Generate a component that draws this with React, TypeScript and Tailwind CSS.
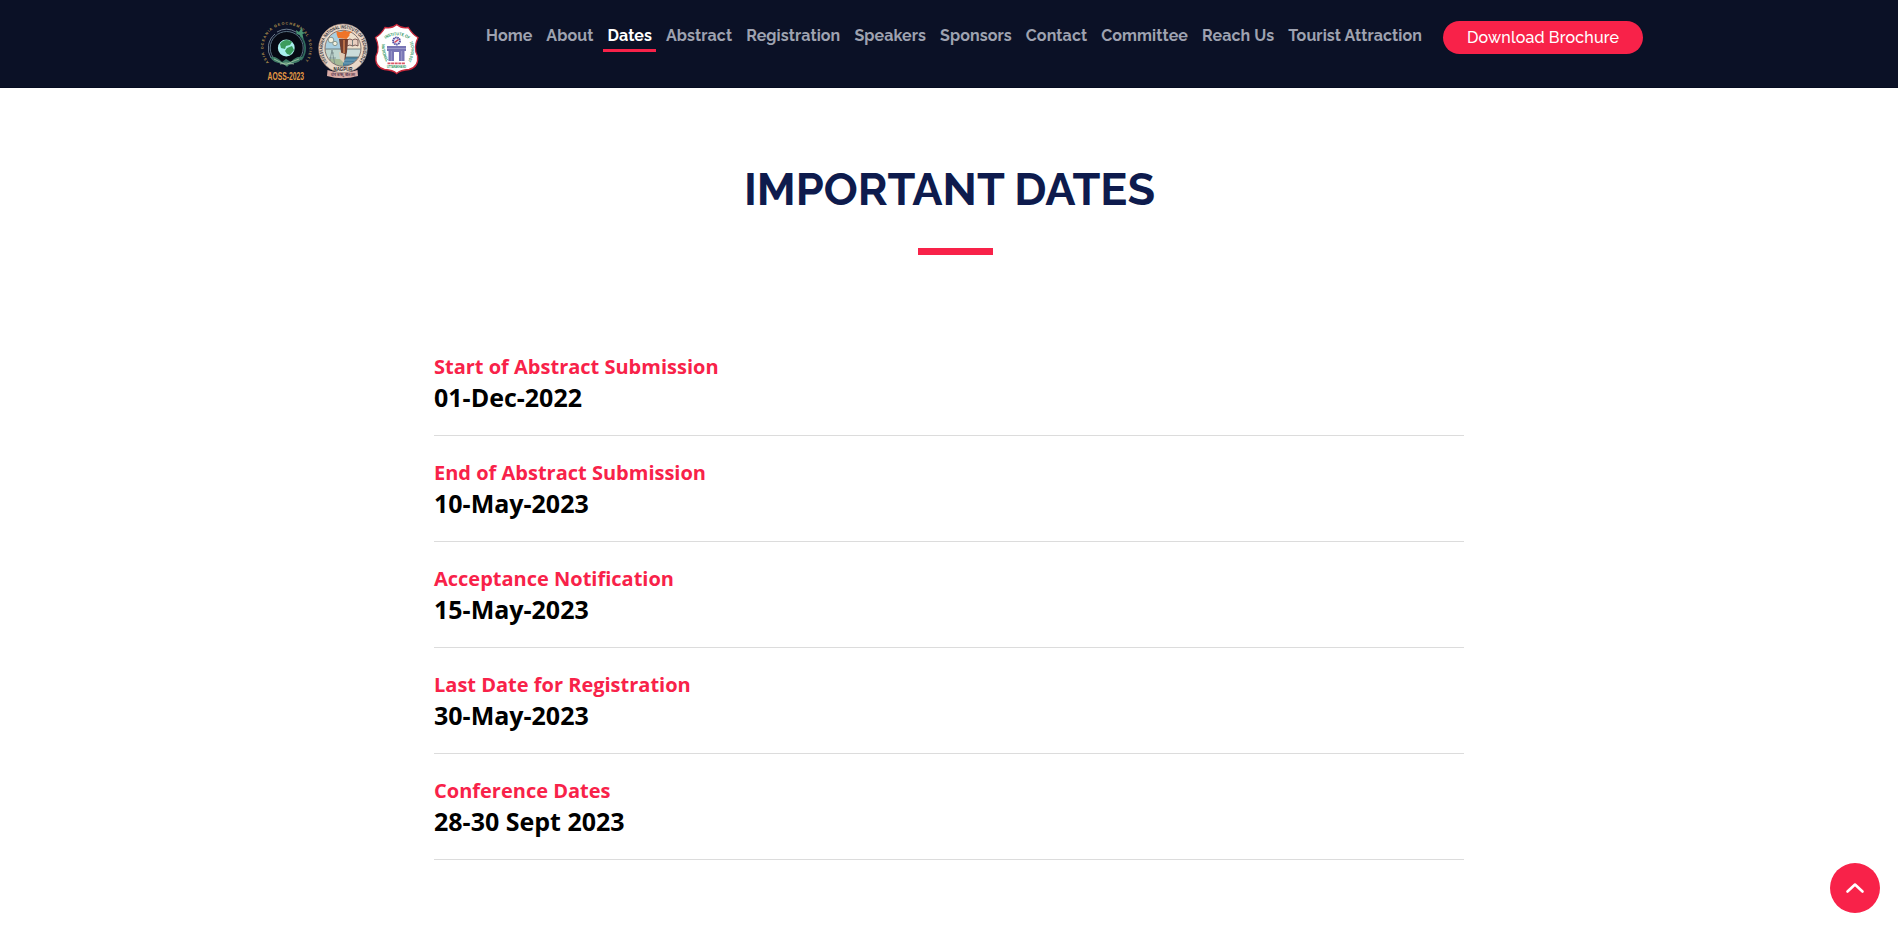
const links = [
  "Home",
  "About",
  "Dates",
  "Abstract",
  "Registration",
  "Speakers",
  "Sponsors",
  "Contact",
  "Committee",
  "Reach Us",
  "Tourist Attraction",
];

const dates = [
  { title: "Start of Abstract Submission", date: "01-Dec-2022" },
  { title: "End of Abstract Submission", date: "10-May-2023" },
  { title: "Acceptance Notification", date: "15-May-2023" },
  { title: "Last Date for Registration", date: "30-May-2023" },
  { title: "Conference Dates", date: "28-30 Sept 2023" },
];

function SocietyLogo() {
  return (
    <svg viewBox="0 0 56 66" className="h-[66px] w-14 overflow-visible">
      <defs>
        <path id="society-ring" d="M11 45.500A23 23 0 1 1 46 45.500" />
      </defs>
      <text fontSize="3.7" fontWeight="700" fill="#b8964f" fontFamily="Liberation Sans, sans-serif">
        <textPath href="#society-ring" textLength="102">ASIA OCEANIA GEOCHEMICAL SOCIETY</textPath>
      </text>
      <circle cx="28.700" cy="31" r="16.500" fill="#070a14" stroke="#5b7282" strokeWidth="1" />
      <path d="M13 41A18.500 18.500 0 0 1 17 17M19 15A18.500 18.500 0 0 1 38 15" fill="none" stroke="#8597a6" strokeWidth=".8" />
      <path d="M42 18.500A18.500 18.500 0 0 1 43 43" fill="none" stroke="#2f6b5c" strokeWidth="1.800" />
      <path d="M38 13l3 2 3-5 .5 5 3 1-3 1 1 5-4-4-3-1z" fill="#4a9474" />
      <path d="M12 40c5-1 8 1 12 5l4-3 5 3c3-4 7-6 12-5-3 5-7 7-12 6l-4 4-4-4c-5 1-10-1-13-6z" fill="#3f7a66" />
      <path d="M16 42l8 4 4 2 5-3 8-3M22 47l6-1 8 1" fill="none" stroke="#a6cba7" strokeWidth=".8" />
      <circle cx="28.300" cy="31" r="8.400" fill="#a9f0ee" />
      <path d="M22 27c3-5 9-5 12-2l-2 3-4 1-1 3-4-1zM29 31l5-2 2 4-4 5-3-1-2-3z" fill="#3c9c5d" />
      <text x="9.500" y="62.800" fontSize="11.400" fontWeight="700" fill="#e59a44" textLength="36.500" lengthAdjust="spacingAndGlyphs" fontFamily="Liberation Sans, sans-serif">
        AOSS-2023
      </text>
    </svg>
  );
}

function InstituteLogo() {
  return (
    <svg viewBox="0 0 52 66" className="h-[66px] w-[52px] overflow-visible">
      <defs>
        <path id="institute-top" d="M11 45.500A20.300 20.300 0 1 1 41 45.500" />
        <clipPath id="institute-clip">
          <circle cx="26" cy="31.300" r="17.700" />
        </clipPath>
      </defs>
      <path d="M10.500 53q15 5 30 0l.5 6q-15.500 4.500-31 0z" fill="#d9aaa5" />
      <text x="14" y="59" fontSize="4" fontWeight="700" fill="#563a50" textLength="24" lengthAdjust="spacingAndGlyphs">योगः कर्मसु कौशलम्</text>
      <circle cx="26" cy="31.300" r="24.300" fill="#ead8c8" stroke="#b99889" strokeWidth=".6" />
      <text fontSize="4.9" fontWeight="700" fill="#292a34" fontFamily="Liberation Sans, sans-serif">
        <textPath href="#institute-top" textLength="92" lengthAdjust="spacingAndGlyphs">VISVESVARAYA NATIONAL INSTITUTE OF TECHNOLOGY</textPath>
      </text>
      <g clipPath="url(#institute-clip)">
        <path d="M8 12h18v20H8z" fill="#a9cfe0" />
        <path d="M26 12h19v20H26z" fill="#eee0cd" />
        <path d="M8 32h18v18H8z" fill="#bed5ce" />
        <path d="M26 32h19v8H26z" fill="#cbdcda" />
        <path d="M26 40h19v10H26z" fill="#48809f" />
        <path d="M8 42h18v8H8z" fill="#a5b996" />
        <circle cx="14" cy="23" r="2.800" fill="#f1efdc" stroke="#75857e" strokeWidth=".8" />
        <circle cx="18" cy="26.500" r="2.200" fill="#f1efdc" stroke="#75857e" strokeWidth=".8" />
        <path d="M12 48l3-15 3 15M12 41h7M14 36h3" fill="none" stroke="#758889" strokeWidth=".8" />
        <path d="M30 23q3-2 5.500 0 2.500-2 5.500 0v6q-3-2-5.500 0-2.500-2-5.500 0z" fill="#e8cfc0" stroke="#6f4e4b" strokeWidth=".9" />
        <path d="M35.500 23v6M8 32h37M26 40h19" stroke="#5b6b6c" strokeWidth=".8" />
        <path d="M27 43h17M27 46h17" stroke="#9bbfd0" strokeWidth=".6" />
      </g>
      <circle cx="26" cy="31.300" r="18" fill="none" stroke="#594b4b" strokeWidth=".7" />
      <path d="M22 22h9l-1 13-2 8-3-2-1-6z" fill="#713d2e" />
      <path d="M26 23h2v13h-2z" fill="#b76e46" />
      <path d="M22 35l6 2-1 9-4-4z" fill="#e1ccb5" />
      <path d="M21 21q-2-4-1.500-7 4 2 8-.5 4 2 9 1-5 1.500-4 4l-3 3.500z" fill="#ef7428" />
      <text x="16.500" y="54" fontSize="5" fontWeight="700" fill="#292a34" textLength="19" lengthAdjust="spacingAndGlyphs" fontFamily="Liberation Sans, sans-serif">NAGPUR</text>
    </svg>
  );
}

function ShieldLogo() {
  return (
    <svg viewBox="0 0 47 66" className="h-[66px] w-[47px] overflow-visible">
      <defs>
        <path id="shield-top" d="M12.500 22Q23.700 14.500 35.500 22" />
        <path id="shield-left" d="M9 27Q8 37 14 46" />
        <path id="shield-right" d="M36.500 25Q40.500 34 34.500 45" />
      </defs>
      <path
        d="M23.700 7.500Q29 12 35.300 10.500Q39.500 17.500 45 20.500Q40 31 44.500 39Q46 50 36 52.500Q27.500 53 23.700 56.500Q20 53 11.500 52.500Q1.500 50 3 39Q7.500 31 2.500 20.500Q8 17.500 12 10.500Q18.500 12 23.700 7.500z"
        fill="#fff"
        stroke="#c9283b"
        strokeWidth="1.300"
      />
      <g fontSize="4.2" fontWeight="700" fill="#26945d" fontFamily="Liberation Sans, sans-serif">
        <text><textPath href="#shield-top" textLength="25" lengthAdjust="spacingAndGlyphs">INSTITUTE OF</textPath></text>
        <text><textPath href="#shield-left" textLength="19" lengthAdjust="spacingAndGlyphs">NATIONAL</textPath></text>
        <text><textPath href="#shield-right" textLength="20" lengthAdjust="spacingAndGlyphs">TECHNOLOGY</textPath></text>
      </g>
      <circle cx="23.500" cy="24" r="3.500" fill="#e8e7f8" stroke="#4e4aa0" strokeWidth="1.800" strokeDasharray="1.500 .6" />
      <path d="M21.500 25.500l4-3" stroke="#d34155" strokeWidth="1.500" />
      <path d="M14 29h19v5h-1.500v10H26V35h-5v9h-5.500V34H14z" fill="#7775b5" />
      <path d="M14 31.500h19M18.300 34v10M28.700 34v10" stroke="#aaa9d3" strokeWidth=".7" />
      <path d="M14.500 46.300h18" stroke="#db5867" strokeWidth="1.800" strokeDasharray="3 .6" />
      <text x="14" y="51" fontSize="3.4" fontWeight="700" fill="#26945d" textLength="19" lengthAdjust="spacingAndGlyphs" fontFamily="Liberation Sans, sans-serif">UTTARAKHAND</text>
    </svg>
  );
}

export default function App() {
  return (
    <div className="flex h-[928px] flex-col overflow-hidden bg-white font-['Open_Sans',sans-serif]">
      <header className="flex h-[88px] shrink-0 items-start border-b border-[#060c21] bg-[#0b1126] pl-[258px] font-['Raleway','Lato',sans-serif]">
        <div className="flex w-[162px] shrink-0 pt-[17px]">
          <SocietyLogo />
          <div className="ml-[3px]"><InstituteLogo /></div>
          <div className="ml-1"><ShieldLogo /></div>
        </div>
        <nav className="ml-[62px] mt-5 flex gap-[6px]">
          {links.map((label) => (
            <a
              key={label}
              href="#"
              className={
                label === "Dates"
                  ? "h-8 whitespace-nowrap border-b-[3px] border-[#f82249] px-1 pt-1 text-base leading-[24px] font-bold tracking-[0.1px] text-white"
                  : "h-8 whitespace-nowrap px-1 pt-1 text-base leading-[24px] font-bold tracking-[0.1px] text-[#9ea2b0]"
              }
            >
              {label}
            </a>
          ))}
        </nav>
        <a
          href="#"
          className="mt-[21px] ml-[17px] flex h-[33px] w-[200px] shrink-0 items-center justify-center rounded-full bg-[#f82249] text-base font-medium tracking-[0.17px] text-white"
        >
          Download Brochure
        </a>
      </header>

      <main className="flex flex-col">
        <div className="flex flex-col items-center pt-[75px]">
          <h2 className="ml-px font-['Raleway','Lato',sans-serif] text-[45px] leading-[54px] font-bold text-[#0e1b4d]">
            IMPORTANT DATES
          </h2>
          <div className="mt-[31px] ml-[13px] h-[7px] w-[75px] bg-[#f82249]" />
        </div>
        <ul className="mx-auto mt-[75px] w-[1030px]">
          {dates.map((item) => (
            <li key={item.title} className="h-[106px] border-b border-[#dcdcdc] pt-[24px]">
              <h3 className="text-xl leading-[26px] font-bold text-[#f82249]">{item.title}</h3>
              <p className="mt-px text-[25px] leading-[32px] font-bold text-black">{item.date}</p>
            </li>
          ))}
        </ul>
      </main>

      <a
        href="#"
        aria-label="Back to top"
        className="fixed right-[18px] bottom-[15px] flex size-[50px] items-center justify-center rounded-full bg-[#f82249]"
      >
        <svg viewBox="0 0 20 12" className="h-3 w-5" fill="none" stroke="#fff" strokeWidth="2.600" strokeLinecap="round" strokeLinejoin="round">
          <path d="M2.500 9.500L10 2.500l7.500 7" />
        </svg>
      </a>
    </div>
  );
}
